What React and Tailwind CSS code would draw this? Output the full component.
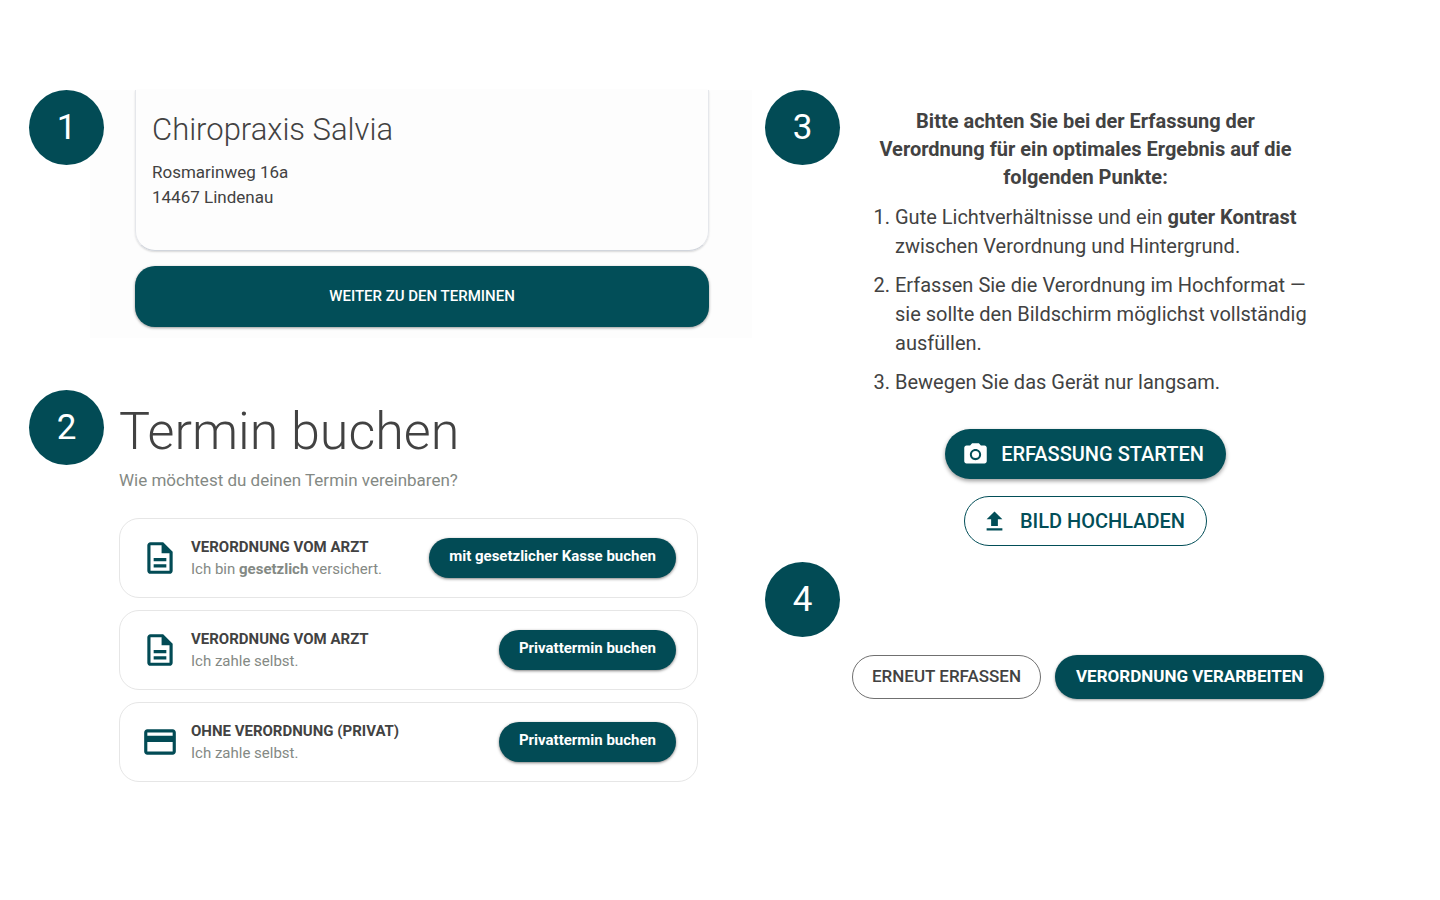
// src/App.jsx
import { MdOutlineCreditCard, MdOutlineDescription, MdCameraAlt, MdFileUpload } from "react-icons/md";

const bookingOptions = [
  {
    id: "kasse",
    icon: MdOutlineDescription,
    title: "VERORDNUNG VOM ARZT",
    text: (
      <>
        Ich bin <b className="font-bold">gesetzlich</b> versichert.
      </>
    ),
    action: "mit gesetzlicher Kasse buchen",
  },
  {
    id: "selbst",
    icon: MdOutlineDescription,
    title: "VERORDNUNG VOM ARZT",
    text: "Ich zahle selbst.",
    action: "Privattermin buchen",
  },
  {
    id: "privat",
    icon: MdOutlineCreditCard,
    title: "OHNE VERORDNUNG (PRIVAT)",
    text: "Ich zahle selbst.",
    action: "Privattermin buchen",
  },
];

function StepNumber({ children }) {
  return (
    <div className="flex size-[75px] shrink-0 items-center justify-center rounded-full bg-[#024b55] text-[35px] leading-none text-white">
      {children}
    </div>
  );
}

function App() {
  return (
    <main className="grid min-h-screen grid-cols-[723fr_662fr] gap-x-[13px] bg-white pt-[90px] pr-[13px] pb-[90px] pl-[29px] font-['Roboto',sans-serif] text-[#424242]">
      <div className="flex flex-col gap-[52px]">
        {/* Step 1: practice */}
        <section className="flex items-start">
          <div className="z-10 -mr-[14px]">
            <StepNumber>1</StepNumber>
          </div>
          <div className="flex-1 bg-[#fdfdfd] pr-[43px] pb-[11px] pl-[45px]">
            <div className="rounded-b-[20px] border-x border-b border-x-gray-200 border-b-gray-300 px-4 pt-[21px] pb-10 shadow-[0_1px_2px_rgba(0,0,0,0.15)]">
              <h2 className="text-[31px] leading-[38px] font-light">Chiropraxis Salvia</h2>
              <p className="mt-[11px] text-[17px] leading-[25px]">
                Rosmarinweg 16a
                <br />
                14467 Lindenau
              </p>
            </div>
            <button className="mt-[15px] h-[61px] w-full rounded-[20px] bg-[#024e58] text-[15px] font-medium text-white shadow-[0_1px_3px_rgba(0,0,0,0.4)]">
              WEITER ZU DEN TERMINEN
            </button>
          </div>
        </section>

        {/* Step 2: booking options */}
        <section className="flex items-start gap-[15px]">
          <StepNumber>2</StepNumber>
          <div className="mr-[54px] flex-1 pt-[10px]">
            <h1 className="text-[52px] leading-[64px] font-light">Termin buchen</h1>
            <p className="mt-1 text-[17px] leading-6 text-[#848984]">Wie möchtest du deinen Termin vereinbaren?</p>
            <ul className="mt-[26px] flex flex-col gap-3">
              {bookingOptions.map(({ id, icon: Icon, title, text, action }) => (
                <li key={id} className="flex h-20 items-center rounded-[20px] border border-[#e6e6e6] px-[21px]">
                  <Icon className="size-[38px] text-[#024b55]" />
                  <div className="ml-3 flex-1">
                    <h3 className="text-[15px] leading-[22px] font-bold">{title}</h3>
                    <p className="text-[15px] leading-[22px] text-[#848984]">{text}</p>
                  </div>
                  <button className="h-10 rounded-full bg-[#024b55] px-5 pb-1 text-[15px] font-bold text-white shadow-[0_1px_3px_rgba(0,0,0,0.5)]">
                    {action}
                  </button>
                </li>
              ))}
            </ul>
          </div>
        </section>
      </div>

      <div className="flex flex-col">
        {/* Step 3: scan hints */}
        <section className="flex items-start">
          <StepNumber>3</StepNumber>
          <div className="ml-5 flex w-[451px] flex-col items-center pt-[17px]">
            <h2 className="text-center text-[20px] leading-7 font-bold">
              Bitte achten Sie bei der Erfassung der
              <br />
              Verordnung für ein optimales Ergebnis auf die
              <br />
              folgenden Punkte:
            </h2>
            <ol className="mt-3 flex list-decimal flex-col gap-[10px] self-stretch pl-[35px] text-[20px] leading-[29px]">
              <li>
                Gute Lichtverhältnisse und ein <b className="font-bold">guter Kontrast</b>
                <br />
                zwischen Verordnung und Hintergrund.
              </li>
              <li>
                Erfassen Sie die Verordnung im Hochformat —
                <br />
                sie sollte den Bildschirm möglichst vollständig
                <br />
                ausfüllen.
              </li>
              <li>Bewegen Sie das Gerät nur langsam.</li>
            </ol>
            <button className="mt-8 flex h-[50px] items-center gap-3 rounded-full bg-[#024e58] pr-[22px] pl-[17px] text-[20px] font-medium text-white shadow-[0_2px_4px_rgba(0,0,0,0.4)]">
              <MdCameraAlt className="size-[27px]" />
              ERFASSUNG STARTEN
            </button>
            <button className="mt-[17px] flex h-[50px] items-center gap-3 rounded-full border border-[#024e58] pr-[21px] pl-4 text-[20px] font-medium text-[#024e58]">
              <MdFileUpload className="size-[27px]" />
              BILD HOCHLADEN
            </button>
          </div>
        </section>

        {/* Step 4: review scan */}
        <section className="mt-4">
          <StepNumber>4</StepNumber>
          <div className="mt-[18px] ml-[87px] flex gap-[14px]">
            <button className="h-11 rounded-full border border-[#707070] px-[19px] text-[17px] font-medium">
              ERNEUT ERFASSEN
            </button>
            <button className="h-11 rounded-full bg-[#024b55] px-[21px] text-[17px] font-bold text-white shadow-[0_1px_3px_rgba(0,0,0,0.4)]">
              VERORDNUNG VERARBEITEN
            </button>
          </div>
        </section>
      </div>
    </main>
  );
}

export default App;
